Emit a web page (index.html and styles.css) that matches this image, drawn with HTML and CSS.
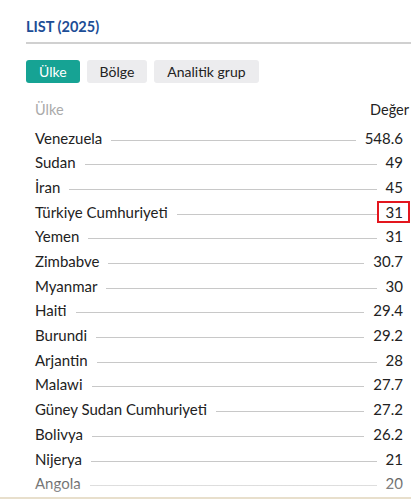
FILE: index.html
```html
<!DOCTYPE html>
<html lang="tr">
<head>
<meta charset="utf-8">
<link rel="stylesheet" href="styles.css">
</head>
<body>
<div class="panel">
  <h2 class="title">LIST (2025)</h2>
  <div class="tabs">
    <button class="tab active">Ülke</button>
    <button class="tab">Bölge</button>
    <button class="tab">Analitik grup</button>
  </div>
  <div class="list">
    <div class="head"><span class="hname">Ülke</span><span class="hval">Değer</span></div>
    <div class="row"><span class="name">Venezuela</span><span class="dots"></span><span class="val">548.6</span></div>
    <div class="row"><span class="name">Sudan</span><span class="dots"></span><span class="val">49</span></div>
    <div class="row"><span class="name">İran</span><span class="dots"></span><span class="val">45</span></div>
    <div class="row"><span class="name">Türkiye Cumhuriyeti</span><span class="dots"></span><span class="val hl">31</span></div>
    <div class="row"><span class="name">Yemen</span><span class="dots"></span><span class="val">31</span></div>
    <div class="row"><span class="name">Zimbabve</span><span class="dots"></span><span class="val">30.7</span></div>
    <div class="row"><span class="name">Myanmar</span><span class="dots"></span><span class="val">30</span></div>
    <div class="row"><span class="name">Haiti</span><span class="dots"></span><span class="val">29.4</span></div>
    <div class="row"><span class="name">Burundi</span><span class="dots"></span><span class="val">29.2</span></div>
    <div class="row"><span class="name">Arjantin</span><span class="dots"></span><span class="val">28</span></div>
    <div class="row"><span class="name">Malawi</span><span class="dots"></span><span class="val">27.7</span></div>
    <div class="row"><span class="name">Güney Sudan Cumhuriyeti</span><span class="dots"></span><span class="val">27.2</span></div>
    <div class="row"><span class="name">Bolivya</span><span class="dots"></span><span class="val">26.2</span></div>
    <div class="row"><span class="name">Nijerya</span><span class="dots"></span><span class="val">21</span></div>
    <div class="row"><span class="name">Angola</span><span class="dots"></span><span class="val">20</span></div>
  </div>
</div>
<div class="fade"></div>
</body>
</html>
```
FILE: styles.css
```css
html, body {
  margin: 0;
  padding: 0;
  background: #fff;
  overflow: hidden;
}
body {
  font-family: Lato, "Open Sans", sans-serif;
  color: #222;
  height: 500px;
  position: relative;
}
.panel {
  padding: 18px 0 0 26px;
}
.title {
  margin: 0;
  font-size: 14.5px;
  font-weight: 700;
  color: #1c4d96;
  line-height: 18px;
  padding-bottom: 6px;
  border-bottom: 2px solid #d0d0d0;
}
.tabs {
  display: flex;
  gap: 7px;
  margin-top: 16px;
}
.tab {
  font-family: inherit;
  font-size: 14px;
  border: none;
  border-radius: 3px;
  background: #ececee;
  color: #222;
  height: 23px;
  padding: 0 13px;
  line-height: 23px;
}
.tab.active {
  background: #16a394;
  color: #fff;
}
.list {
  padding-left: 9px;
  margin-top: 17px;
}
.head {
  display: flex;
  justify-content: space-between;
  font-size: 14.5px;
  line-height: 20px;
  height: 20px;
  margin-right: 2px;
  margin-bottom: 5.6px;
}
.hname { color: #aaa; }
.hval { color: #222; }
.row {
  display: flex;
  align-items: baseline;
  height: 24.7px;
  line-height: 24.7px;
  font-size: 15px;
  margin-right: 8px;
}
.dots {
  flex: 1;
  border-bottom: 1px solid #c8c8c8;
  margin: 0 9px;
  position: relative;
  top: -3px;
}
.val { position: relative; }
.hl::after {
  content: "";
  position: absolute;
  left: -9px;
  right: -7px;
  top: 1px;
  bottom: 1px;
  border: 2px solid #e3161e;
}
.fade {
  position: absolute;
  left: 0;
  right: 0;
  bottom: 1px;
  height: 26px;
  background: linear-gradient(rgba(255,255,255,0.2), rgba(255,255,255,0.55));
  border-bottom: 2px solid #e8dfcc;
}
```
